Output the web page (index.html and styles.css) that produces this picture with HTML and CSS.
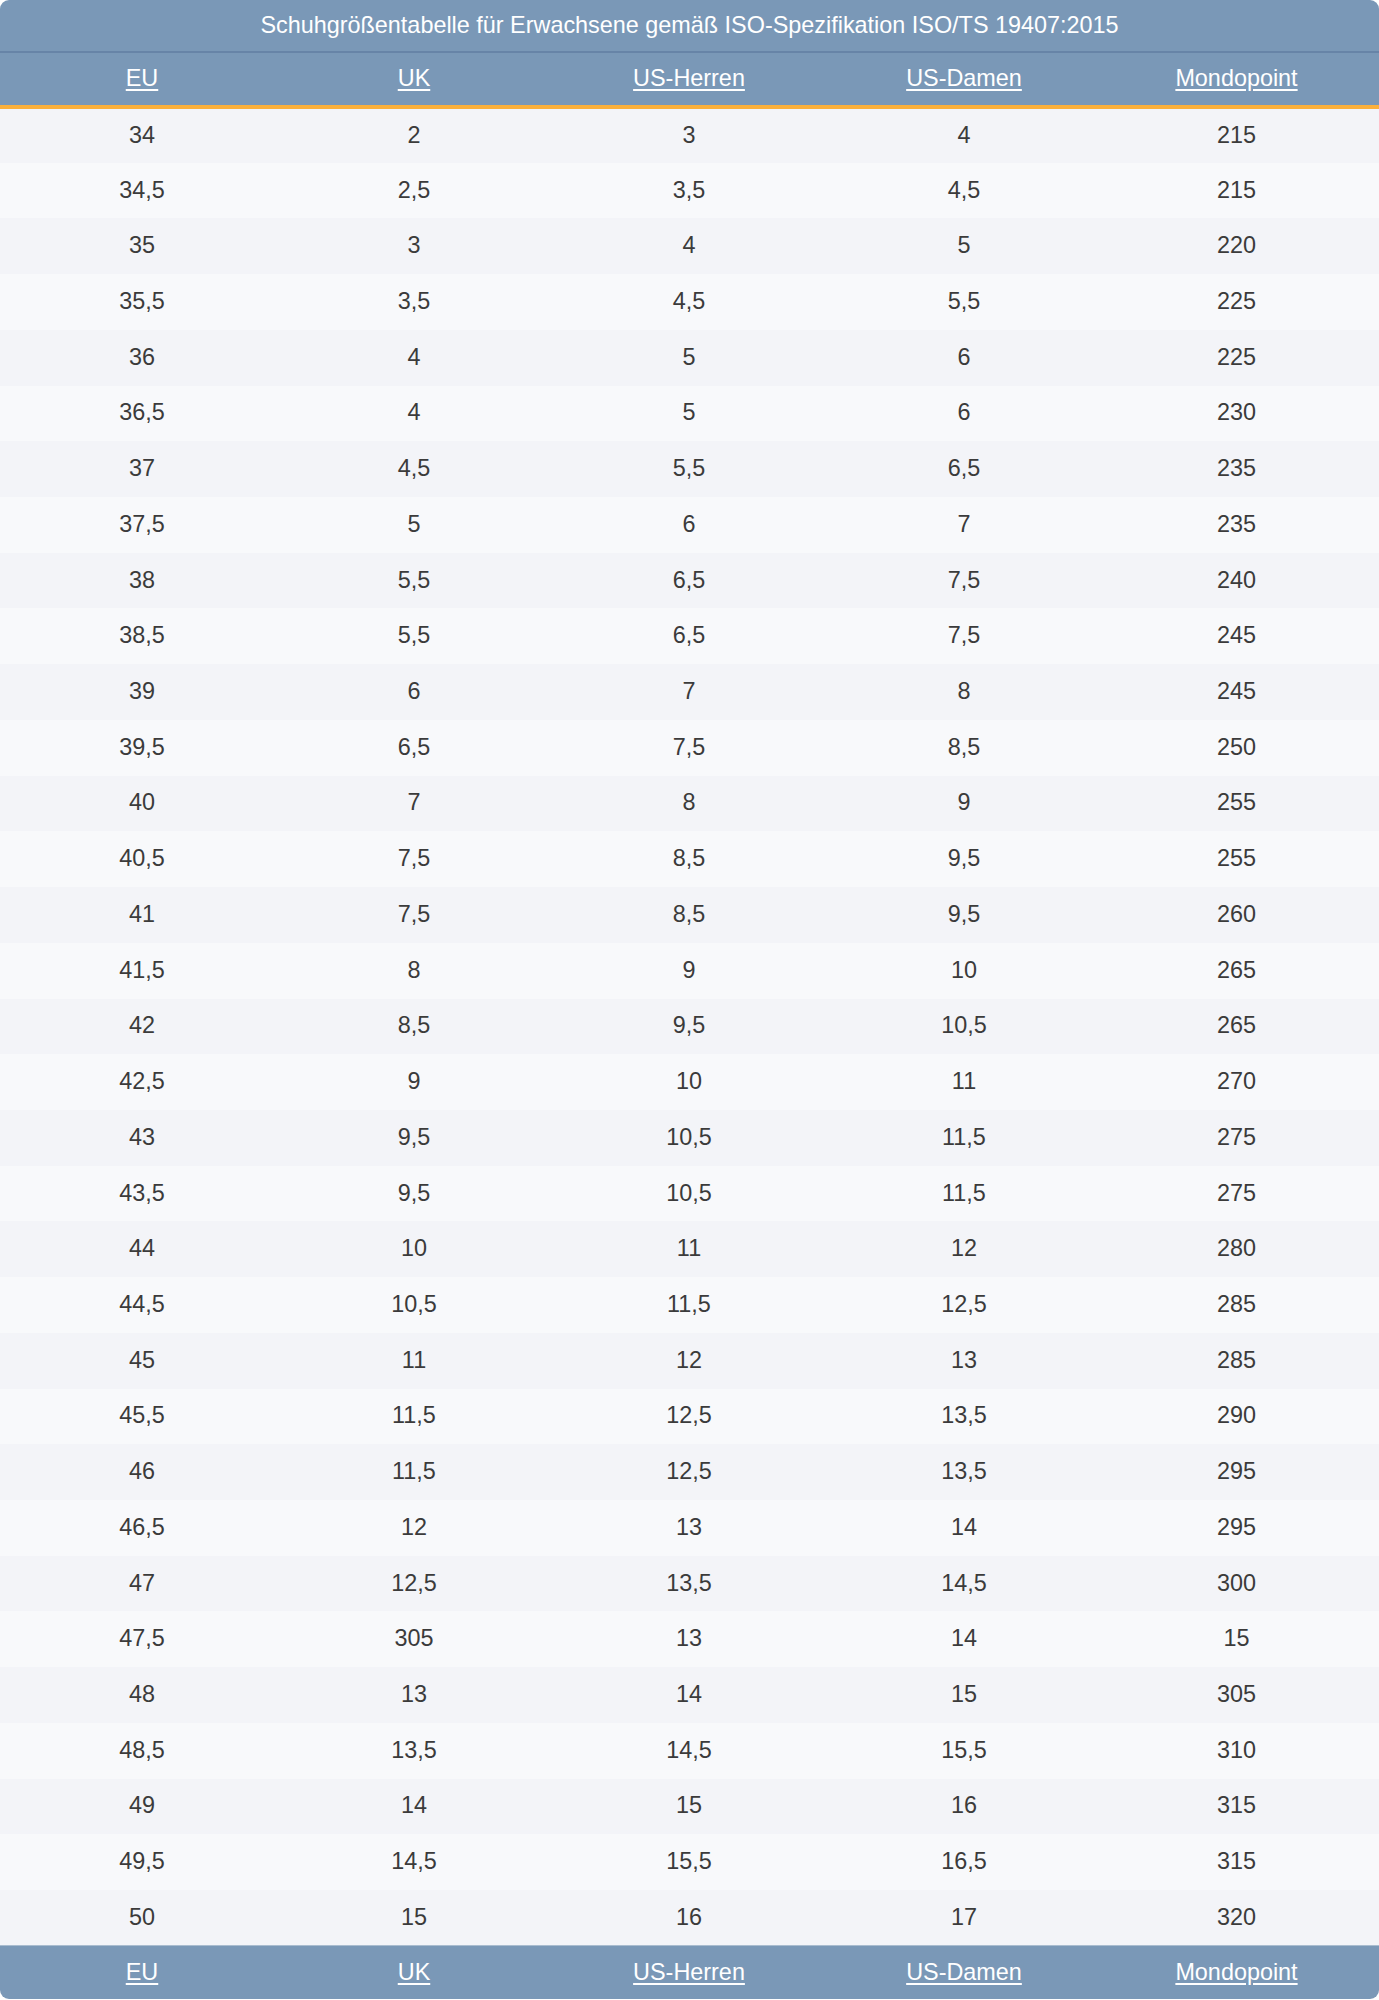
FILE: index.html
```html
<!DOCTYPE html>
<html lang="de">
<head>
<meta charset="utf-8">
<title>Schuhgrößentabelle</title>
<link rel="stylesheet" href="styles.css">
</head>
<body>
<div class="table-wrap">
<table class="sizes">
<colgroup>
<col class="c1"><col class="c2"><col class="c3"><col class="c4"><col class="c5">
</colgroup>
<thead>
<tr class="title-row"><th colspan="5">Schuhgrößentabelle für Erwachsene gemäß ISO-Spezifikation ISO/TS 19407:2015</th></tr>
<tr class="head-row"><th><a href="#">EU</a></th><th><a href="#">UK</a></th><th><a href="#">US-Herren</a></th><th><a href="#">US-Damen</a></th><th><a href="#">Mondopoint</a></th></tr>
</thead>
<tbody>
<tr><td>34</td><td>2</td><td>3</td><td>4</td><td>215</td></tr>
<tr><td>34,5</td><td>2,5</td><td>3,5</td><td>4,5</td><td>215</td></tr>
<tr><td>35</td><td>3</td><td>4</td><td>5</td><td>220</td></tr>
<tr><td>35,5</td><td>3,5</td><td>4,5</td><td>5,5</td><td>225</td></tr>
<tr><td>36</td><td>4</td><td>5</td><td>6</td><td>225</td></tr>
<tr><td>36,5</td><td>4</td><td>5</td><td>6</td><td>230</td></tr>
<tr><td>37</td><td>4,5</td><td>5,5</td><td>6,5</td><td>235</td></tr>
<tr><td>37,5</td><td>5</td><td>6</td><td>7</td><td>235</td></tr>
<tr><td>38</td><td>5,5</td><td>6,5</td><td>7,5</td><td>240</td></tr>
<tr><td>38,5</td><td>5,5</td><td>6,5</td><td>7,5</td><td>245</td></tr>
<tr><td>39</td><td>6</td><td>7</td><td>8</td><td>245</td></tr>
<tr><td>39,5</td><td>6,5</td><td>7,5</td><td>8,5</td><td>250</td></tr>
<tr><td>40</td><td>7</td><td>8</td><td>9</td><td>255</td></tr>
<tr><td>40,5</td><td>7,5</td><td>8,5</td><td>9,5</td><td>255</td></tr>
<tr><td>41</td><td>7,5</td><td>8,5</td><td>9,5</td><td>260</td></tr>
<tr><td>41,5</td><td>8</td><td>9</td><td>10</td><td>265</td></tr>
<tr><td>42</td><td>8,5</td><td>9,5</td><td>10,5</td><td>265</td></tr>
<tr><td>42,5</td><td>9</td><td>10</td><td>11</td><td>270</td></tr>
<tr><td>43</td><td>9,5</td><td>10,5</td><td>11,5</td><td>275</td></tr>
<tr><td>43,5</td><td>9,5</td><td>10,5</td><td>11,5</td><td>275</td></tr>
<tr><td>44</td><td>10</td><td>11</td><td>12</td><td>280</td></tr>
<tr><td>44,5</td><td>10,5</td><td>11,5</td><td>12,5</td><td>285</td></tr>
<tr><td>45</td><td>11</td><td>12</td><td>13</td><td>285</td></tr>
<tr><td>45,5</td><td>11,5</td><td>12,5</td><td>13,5</td><td>290</td></tr>
<tr><td>46</td><td>11,5</td><td>12,5</td><td>13,5</td><td>295</td></tr>
<tr><td>46,5</td><td>12</td><td>13</td><td>14</td><td>295</td></tr>
<tr><td>47</td><td>12,5</td><td>13,5</td><td>14,5</td><td>300</td></tr>
<tr><td>47,5</td><td>305</td><td>13</td><td>14</td><td>15</td></tr>
<tr><td>48</td><td>13</td><td>14</td><td>15</td><td>305</td></tr>
<tr><td>48,5</td><td>13,5</td><td>14,5</td><td>15,5</td><td>310</td></tr>
<tr><td>49</td><td>14</td><td>15</td><td>16</td><td>315</td></tr>
<tr><td>49,5</td><td>14,5</td><td>15,5</td><td>16,5</td><td>315</td></tr>
<tr><td>50</td><td>15</td><td>16</td><td>17</td><td>320</td></tr>
</tbody>
<tfoot>
<tr class="foot-row"><th><a href="#">EU</a></th><th><a href="#">UK</a></th><th><a href="#">US-Herren</a></th><th><a href="#">US-Damen</a></th><th><a href="#">Mondopoint</a></th></tr>
</tfoot>
</table>
</div>
</body>
</html>
```

FILE: styles.css
```css
html, body {
  margin: 0;
  padding: 0;
  background: #ffffff;
}

body {
  font-family: "Liberation Sans", Arial, sans-serif;
  font-size: 23.4px;
  color: #3b3b3b;
}

.table-wrap {
  width: 1379px;
  border-radius: 9px;
  overflow: hidden;
}

.sizes {
  width: 100%;
  table-layout: fixed;
  border-collapse: collapse;
  border-spacing: 0;
}

.c1 { width: 284px; }
.c2 { width: 260px; }
.c3 { width: 290px; }
.c4 { width: 260px; }
.c5 { width: 285px; }

.sizes th,
.sizes td {
  padding: 0;
  text-align: center;
  vertical-align: middle;
  line-height: 26px;
  font-weight: normal;
}

.title-row th {
  height: 49px;
  background: #7a98b7;
  color: #ffffff;
  border-bottom: 2px solid #6784a7;
  padding-bottom: 2px;
}

.head-row th {
  height: 50px;
  background: #7a98b7;
  border-bottom: 4px solid #fbb03b;
  padding-bottom: 2px;
}

.head-row a,
.foot-row a {
  color: #ffffff;
  text-decoration: underline;
  text-decoration-thickness: 2px;
  text-underline-offset: 3px;
}

.sizes tbody tr {
  height: 55.73px;
}

.sizes tbody td {
  color: #3b3b3b;
  padding-bottom: 2px;
}

.sizes tbody tr:nth-child(odd) td {
  background: #f3f4f8;
}

.sizes tbody tr:nth-child(even) td {
  background: #f8f9fb;
}

.foot-row th {
  height: 51px;
  background: #7a98b7;
  border-top: 1px solid #a9bccf;
  padding-bottom: 2px;
}
```
